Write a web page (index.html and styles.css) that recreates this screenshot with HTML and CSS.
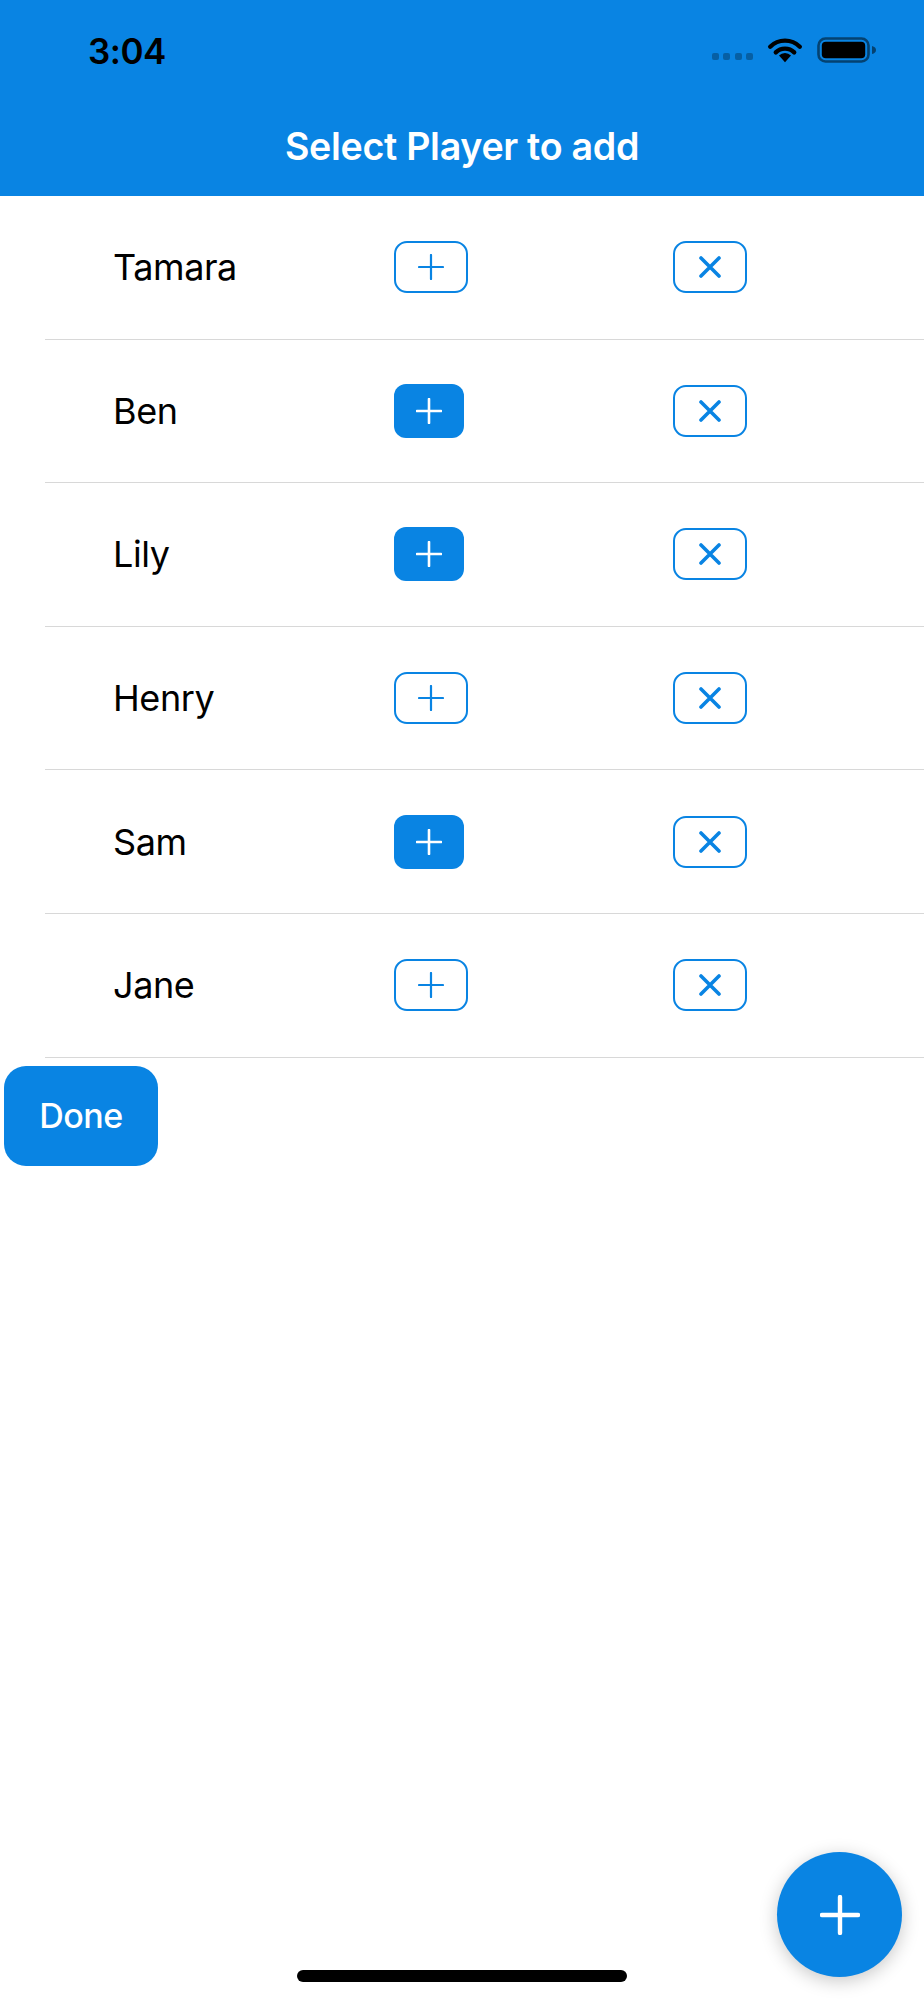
FILE: index.html
```html
<!DOCTYPE html>
<html lang="en">
<head>
<meta charset="utf-8">
<title>Select Player to add</title>
<link rel="stylesheet" href="styles.css">
</head>
<body>
<div class="screen">
  <header class="topbar">
    <div class="status">
      <span class="time">3:04</span>
      <div class="status-icons">
        <div class="signal"><i></i><i></i><i></i><i></i></div>
        <svg class="wifi" width="36" height="26" viewBox="0 0 36 26">
          <path d="M3.2 9.7 A21 21 0 0 1 32.8 9.7" fill="none" stroke="#000" stroke-width="4.4" stroke-linecap="round"/>
          <path d="M8.8 15.4 A13 13 0 0 1 27.2 15.4" fill="none" stroke="#000" stroke-width="4.4" stroke-linecap="round"/>
          <path d="M12 18.6 A8.4 8.4 0 0 1 24 18.6 L18 25.2 Z" fill="#000"/>
        </svg>
        <svg class="battery" width="60" height="26" viewBox="0 0 60 26">
          <rect x="1.5" y="1.5" width="50" height="23" rx="7" fill="none" stroke="rgba(0,0,0,0.5)" stroke-width="2.6"/>
          <rect x="4.8" y="4.8" width="43.4" height="16.4" rx="4" fill="#000"/>
          <path d="M55 9 Q59 10 59 13 Q59 16 55 17 Z" fill="rgba(0,0,0,0.5)"/>
        </svg>
      </div>
    </div>
    <div class="nav">Select Player to add</div>
  </header>

  <ul class="players">
    <li class="player">
      <span class="name">Tamara</span>
      <button class="btn btn-add"><svg width="26" height="26" viewBox="0 0 26 26"><path d="M13 1V25M1 13H25" stroke="currentColor" stroke-width="2.2" stroke-linecap="round"/></svg></button>
      <button class="btn btn-remove"><svg width="24" height="22" viewBox="0 0 24 22"><path d="M3 2L21 20M21 2L3 20" stroke="currentColor" stroke-width="3.6" stroke-linecap="round"/></svg></button>
    </li>
    <li class="player">
      <span class="name">Ben</span>
      <button class="btn btn-add is-selected"><svg width="26" height="26" viewBox="0 0 26 26"><path d="M13 1V25M1 13H25" stroke="currentColor" stroke-width="2.6" stroke-linecap="round"/></svg></button>
      <button class="btn btn-remove"><svg width="24" height="22" viewBox="0 0 24 22"><path d="M3 2L21 20M21 2L3 20" stroke="currentColor" stroke-width="3.6" stroke-linecap="round"/></svg></button>
    </li>
    <li class="player">
      <span class="name">Lily</span>
      <button class="btn btn-add is-selected"><svg width="26" height="26" viewBox="0 0 26 26"><path d="M13 1V25M1 13H25" stroke="currentColor" stroke-width="2.6" stroke-linecap="round"/></svg></button>
      <button class="btn btn-remove"><svg width="24" height="22" viewBox="0 0 24 22"><path d="M3 2L21 20M21 2L3 20" stroke="currentColor" stroke-width="3.6" stroke-linecap="round"/></svg></button>
    </li>
    <li class="player">
      <span class="name">Henry</span>
      <button class="btn btn-add"><svg width="26" height="26" viewBox="0 0 26 26"><path d="M13 1V25M1 13H25" stroke="currentColor" stroke-width="2.2" stroke-linecap="round"/></svg></button>
      <button class="btn btn-remove"><svg width="24" height="22" viewBox="0 0 24 22"><path d="M3 2L21 20M21 2L3 20" stroke="currentColor" stroke-width="3.6" stroke-linecap="round"/></svg></button>
    </li>
    <li class="player">
      <span class="name">Sam</span>
      <button class="btn btn-add is-selected"><svg width="26" height="26" viewBox="0 0 26 26"><path d="M13 1V25M1 13H25" stroke="currentColor" stroke-width="2.6" stroke-linecap="round"/></svg></button>
      <button class="btn btn-remove"><svg width="24" height="22" viewBox="0 0 24 22"><path d="M3 2L21 20M21 2L3 20" stroke="currentColor" stroke-width="3.6" stroke-linecap="round"/></svg></button>
    </li>
    <li class="player">
      <span class="name">Jane</span>
      <button class="btn btn-add"><svg width="26" height="26" viewBox="0 0 26 26"><path d="M13 1V25M1 13H25" stroke="currentColor" stroke-width="2.2" stroke-linecap="round"/></svg></button>
      <button class="btn btn-remove"><svg width="24" height="22" viewBox="0 0 24 22"><path d="M3 2L21 20M21 2L3 20" stroke="currentColor" stroke-width="3.6" stroke-linecap="round"/></svg></button>
    </li>
  </ul>

  <button class="done">Done</button>

  <button class="fab" aria-label="Add player">
    <svg width="40" height="40" viewBox="0 0 40 40"><path d="M20 2V38M2 20H38" stroke="#fff" stroke-width="4.4" stroke-linecap="round"/></svg>
  </button>

  <div class="home-indicator"></div>
</div>
</body>
</html>
```

FILE: styles.css
```css
* {
  box-sizing: border-box;
}

html, body {
  margin: 0;
  padding: 0;
  background: #ffffff;
}

body {
  font-family: Inter, "Liberation Sans", Arial, sans-serif;
  color: #000;
}

.screen {
  position: relative;
  width: 924px;
  height: 2000px;
  overflow: hidden;
  background: #fff;
}

.topbar {
  background: #0984e3;
  height: 196px;
}

.status {
  display: flex;
  justify-content: space-between;
  align-items: center;
  height: 98px;
  padding: 0 47px 0 88px;
}

.time {
  font-size: 35px;
  font-weight: 600;
  letter-spacing: -0.5px;
  line-height: 1;
  margin-top: 4px;
}

.status-icons {
  display: flex;
  align-items: center;
  gap: 14px;
  margin-top: 2px;
}

.signal {
  display: flex;
  gap: 4.5px;
  align-items: center;
  margin-top: 13px;
}

.signal i {
  display: block;
  width: 7px;
  height: 7px;
  border-radius: 2px;
  background: rgba(0, 0, 0, 0.28);
}

.wifi, .battery {
  display: block;
}

.nav {
  height: 98px;
  display: flex;
  align-items: center;
  justify-content: center;
  color: #fff;
  font-size: 37.6px;
  font-weight: 600;
  letter-spacing: -0.3px;
  padding-bottom: 2px;
}

.players {
  list-style: none;
  margin: 0 0 0 45px;
  padding: 0;
}

.player {
  display: grid;
  grid-template-columns: 281px 279px auto;
  align-items: center;
  height: 143.6px;
  padding-left: 68px;
  border-bottom: 1.5px solid #d8d8d8;
}

.name {
  font-size: 36px;
  font-weight: 400;
  letter-spacing: -0.4px;
}

.btn {
  display: flex;
  align-items: center;
  justify-content: center;
  width: 74px;
  height: 52px;
  padding: 0;
  margin: 0;
  border: 2px solid #0984e3;
  border-radius: 13px;
  background: #fff;
  color: #0984e3;
  cursor: pointer;
}

.btn svg {
  display: block;
}

.btn-add.is-selected {
  width: 70px;
  height: 54px;
  border: none;
  background: #0984e3;
  color: #fff;
  border-radius: 12px;
}

.done {
  display: block;
  margin: 8px 0 0 4px;
  width: 154px;
  height: 100px;
  border: none;
  border-radius: 22px;
  background: #0984e3;
  color: #fff;
  font-family: Inter, "Liberation Sans", Arial, sans-serif;
  font-size: 34px;
  font-weight: 500;
  letter-spacing: -0.5px;
  padding: 0;
}

.fab {
  position: absolute;
  left: 777px;
  top: 1852px;
  width: 125px;
  height: 125px;
  border-radius: 50%;
  border: none;
  padding: 0;
  background: #0984e3;
  display: flex;
  align-items: center;
  justify-content: center;
  box-shadow: 0 4px 18px rgba(0, 0, 0, 0.22);
}

.home-indicator {
  position: absolute;
  left: 297px;
  top: 1970px;
  width: 330px;
  height: 12px;
  border-radius: 6px;
  background: #000;
}
```
